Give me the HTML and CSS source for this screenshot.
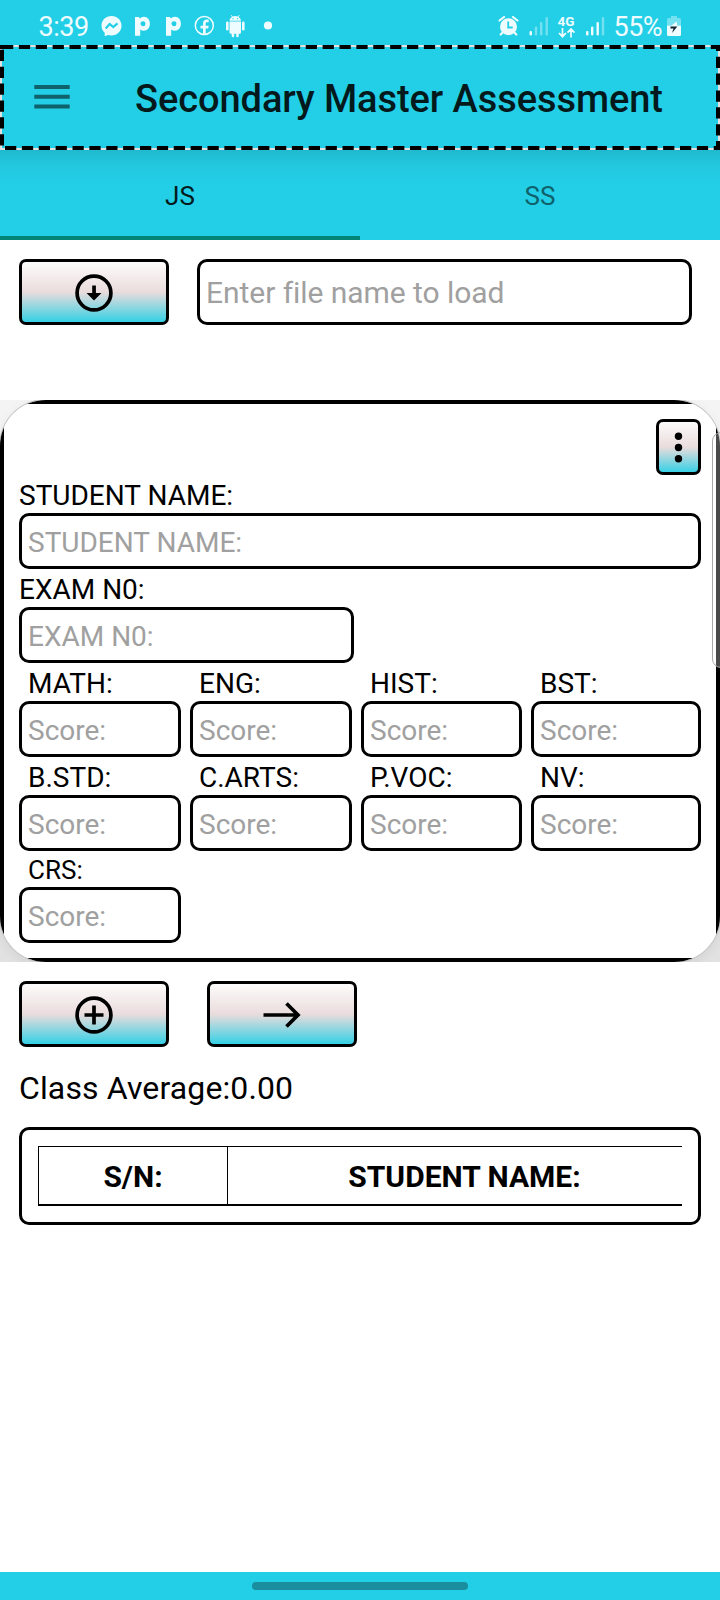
FILE: index.html
```html
<!DOCTYPE html>
<html lang="en">
<head>
<meta charset="utf-8">
<title>Secondary Master Assessment</title>
<link rel="stylesheet" href="styles.css">
</head>
<body>
<div class="screen">
  <div class="status">
    <span class="clock">3:39</span>
    <svg class="status-left" width="174" height="24" viewBox="0 0 174 24" fill="#eefcff">
      <path d="M10.500 1C4.600 1 .5 5.300.5 10.700c0 2.900 1.200 5.300 3.200 7v3.500l3.300-1.300c1.100.3 2.300.5 3.500.5 5.900 0 10-4.300 10-9.700S16.400 1 10.500 1z"/>
      <path d="M4.700 13.500l4-4.500 3.500 3 4.300-3.700" fill="none" stroke="#23cfe6" stroke-width="2.200"/>
      <g id="p-logo"><path fill-rule="evenodd" d="M34 2h3.800l1.200 1.500C40 2.500 41.300 1.800 42.900 1.800c3.700 0 6 3.100 6 6.900s-2.400 7-6.200 7c-1.300 0-2.500-.4-3.500-1.200v6.200H34zM42 6.200a2.500 2.500 0 1 0 .01 5A2.500 2.500 0 0 0 42 6.200z"/></g>
      <use href="#p-logo" x="31"/>
      <circle cx="103.300" cy="10.500" r="9" fill="none" stroke="#eefcff" stroke-width="1.500"/>
      <path d="M102 19.500v-6h-2.500v-2.800h2.500V8.500c0-2.800 1.500-4 4-4h1.700v2.700h-1.600c-1 0-1.400.4-1.400 1.400v2.100h3l-.5 2.800h-2.500v6z"/>
      <path d="M128.500 6.500h11.500v11a1.200 1.200 0 0 1-1.200 1.200h-1.100v2.300a1.200 1.200 0 0 1-2.500 0v-2.300h-2v2.300a1.200 1.200 0 0 1-2.500 0v-2.300h-1a1.200 1.200 0 0 1-1.200-1.200zM128.500 5.700c.2-1.700 1.100-3 2.500-3.800L129.800.3l.6-.4 1.200 1.600a7 7 0 0 1 5.300 0l1.200-1.600.6.4-1.200 1.600c1.400.8 2.300 2.100 2.500 3.800z"/>
      <rect x="125" y="6.500" width="2.600" height="9" rx="1.300"/><rect x="141" y="6.500" width="2.600" height="9" rx="1.300"/>
      <circle cx="132" cy="3.700" r=".6" fill="#23cfe6"/><circle cx="136.600" cy="3.700" r=".6" fill="#23cfe6"/>
      <circle cx="167" cy="10.500" r="4.100"/>
    </svg>
    <div class="status-right">
      <svg width="52" height="24" viewBox="0 0 52 24" fill="#eefcff">
        <circle cx="10.500" cy="11.700" r="8.500"/>
        <path d="M1.500 5.500L6 2M19.500 5.500L15 2M5 17l-2.300 2.500M16 17l2.300 2.500" stroke="#eefcff" stroke-width="2.200" stroke-linecap="round"/>
        <path d="M10.200 6.500v6h4.500" fill="none" stroke="#23cfe6" stroke-width="1.800"/>
        <rect x="31.500" y="16" width="2.500" height="4.500" rx="1"/>
        <g opacity=".4"><rect x="36.800" y="11.500" width="2.400" height="9" rx="1"/><rect x="42" y="7" width="2.400" height="13.500" rx="1"/><rect x="47.500" y="2" width="2.400" height="18.500" rx="1"/></g>
      </svg>
      <div class="network">
        <span>4G</span>
        <svg width="18" height="10" viewBox="0 0 18 10" fill="none" stroke="#eefcff" stroke-width="1.700"><path d="M4.500 0v8.500M1 5l3.500 3.700L8 5M13 9.500V1M9.500 4.700L13 1l3.500 3.700"/></svg>
      </div>
      <svg class="bars" width="20" height="24" viewBox="0 0 20 24" fill="#eefcff">
        <rect x="1" y="16" width="2.500" height="4.500" rx="1"/><rect x="6" y="11.500" width="2.400" height="9" rx="1"/><rect x="11.500" y="7" width="2.400" height="13.500" rx="1"/><rect opacity=".4" x="16.800" y="2" width="2.400" height="18.500" rx="1"/>
      </svg>
      <span class="percent">55%</span>
      <svg class="battery" width="14" height="24" viewBox="0 0 14 24">
        <path d="M4 1h6v2h2.500q1.500 0 1.500 1.500V10.500H0V4.500Q0 3 1.500 3H4z" fill="#eefcff" opacity=".4"/>
        <path d="M0 10.500h14v9q0 1.500-1.500 1.500h-11Q0 21 0 19.500z" fill="#eefcff"/>
        <path d="M9.500 6.500L3.500 11.500h7z" fill="#eefcff"/><path d="M3.500 11.500h6.800L5 18l1.500-4.500H3.500z" fill="#123"/>
      </svg>
    </div>
  </div>

  <header class="toolbar">
    <svg class="menu" width="36" height="24" viewBox="0 0 36 24"><path d="M.3 2h35.400M.3 11.800h35.400M.3 21.600h35.400" stroke="#0f616b" stroke-width="4"/></svg>
    <h1>Secondary Master Assessment</h1>
    <svg class="outline" width="720" height="105" fill="none">
      <rect x="1" y="1" width="718" height="103" stroke="#e2e2e2" stroke-width="2"/>
      <rect x="2" y="2" width="716" height="101" stroke="#000" stroke-width="4" stroke-dasharray="11.250 5.625"/>
      <path d="M0 2h8" stroke="#000" stroke-width="4"/>
    </svg>
  </header>
  <nav class="tabs"><span class="tab active">JS</span><span class="tab">SS</span></nav>

  <section class="load">
    <button class="btn wide"><svg width="40" height="40" viewBox="0 0 40 40"><circle cx="20" cy="20" r="16.900" fill="none" stroke="#000" stroke-width="3.700"/><path d="M18.200 12.500h3.700v7.500h5.600L20 27.500 12.500 20h5.700z"/></svg></button>
    <div class="field file">Enter file name to load</div>
  </section>

  <div class="card-wrap">
    <div class="card">
      <div class="card-body">
        <button class="btn more"><svg width="10" height="32" viewBox="0 0 10 32"><circle cx="4.500" cy="5.300" r="3.700"/><circle cx="4.500" cy="16.500" r="3.700"/><circle cx="4.500" cy="27.700" r="3.700"/></svg></button>
        <div class="label">STUDENT NAME:</div>
        <div class="field">STUDENT NAME:</div>
        <div class="label">EXAM N0:</div>
        <div class="field exam">EXAM N0:</div>
        <div class="scores">
          <div><div class="label">MATH:</div><div class="field">Score:</div></div>
          <div><div class="label">ENG:</div><div class="field">Score:</div></div>
          <div><div class="label">HIST:</div><div class="field">Score:</div></div>
          <div><div class="label">BST:</div><div class="field">Score:</div></div>
          <div><div class="label">B.STD:</div><div class="field">Score:</div></div>
          <div><div class="label">C.ARTS:</div><div class="field">Score:</div></div>
          <div><div class="label">P.VOC:</div><div class="field">Score:</div></div>
          <div><div class="label">NV:</div><div class="field">Score:</div></div>
          <div><div class="label small">CRS:</div><div class="field">Score:</div></div>
        </div>
      </div>
    </div>
    <div class="scrollbar"></div>
  </div>

  <section class="actions">
    <button class="btn wide"><svg width="40" height="40" viewBox="0 0 40 40" fill="none" stroke="#000" stroke-width="3.700"><circle cx="20" cy="20" r="16.900"/><path d="M10.500 20h19M20 10.500v19"/></svg></button>
    <button class="btn wide"><svg width="40" height="40" viewBox="0 0 40 40" fill="none" stroke="#000" stroke-width="3.700"><path d="M1.500 20h35M24.500 8.500L36 20 24.500 31.500"/></svg></button>
  </section>
  <p class="average">Class Average:0.00</p>
  <div class="results">
    <div class="row"><div class="sn">S/N:</div><div class="name">STUDENT NAME:</div></div>
  </div>
  <footer class="gesture"><div class="pill"></div></footer>
</div>
</body>
</html>
```
FILE: styles.css
```css
* { box-sizing: border-box; }
body { margin: 0; font-family: Roboto, sans-serif; color: #000; background: #fff; }
svg { display: block; flex: none; }
.screen { width: 720px; height: 1600px; display: flex; flex-direction: column; overflow: hidden; }
.status { height: 45px; flex: none; background: #23cfe6; display: flex; padding: 15px 39.500px 0 38.500px; color: #eefcff; font-size: 27px; line-height: 24px; }
.clock { width: 62.500px; letter-spacing: -0.500px; }
.status-right { margin-left: auto; display: flex; }
.network { width: 18px; margin: 0 9px 0 8px; font-size: 13.500px; font-weight: 700; line-height: 13px; }
.bars { margin-right: 9px; }
.percent { width: 50px; letter-spacing: -0.500px; margin-right: 3px; }
.toolbar { position: relative; height: 105px; flex: none; background: #23cfe6; display: flex; align-items: center; padding-left: 34px; }
.menu { margin-top: -2px; }
.toolbar h1 { margin: 2px 0 0 65px; font-size: 38px; font-weight: 500; line-height: 44px; letter-spacing: -0.070px; color: #03191c; white-space: nowrap; }
.outline { position: absolute; left: 0; top: 0; }
.tabs { height: 90px; flex: none; display: flex; background: linear-gradient(#20b9cf, #22c7dd 14px, #23cfe6 34px); }
.tab { flex: 1; text-align: center; font-size: 26px; line-height: 92px; color: #0f616b; }
.active { color: #03191c; border-bottom: 4px solid #008577; }
.load { display: flex; gap: 28px; padding: 19px 19px 0; height: 160px; flex: none; }
.btn { margin: 0; padding: 0; display: flex; align-items: center; justify-content: center; border: 3px solid #000; border-radius: 7px; background: linear-gradient(#fff, #eadcdc 50%, #23cfe6) border-box; }
.wide { width: 150px; height: 66px; padding-top: 1px; }
.field { height: 56px; border: 3px solid #000; border-radius: 10px; padding: 1px 0 0 6px; font-size: 28px; line-height: 52px; color: #a0a0a0; white-space: nowrap; }
.file { width: 495px; height: 66px; font-size: 30px; line-height: 60px; letter-spacing: -0.050px; }
.card-wrap { position: relative; height: 562px; flex: none; overflow: hidden; background: linear-gradient(#f4f4f4 50%, #e2e2e2 50%); }
.card { height: 562px; border-radius: 46px; overflow: hidden; box-shadow: 0 0 0 1px #c4c4c4, 0 4px 14px rgba(0, 0, 0, .07); }
.card-body { height: 562px; border: 4px solid #000; background: #fff; padding: 15px; }
.more { width: 45px; height: 56px; margin-left: auto; }
.label { height: 38px; font-size: 28px; line-height: 41px; white-space: nowrap; }
.exam { width: 335px; }
.scores { display: grid; grid-template-columns: 162px 162px 161px 170px; column-gap: 9px; }
.scores .label { padding-left: 9px; }
.scores .small { height: 36px; font-size: 26px; line-height: 38px; }
.scrollbar { position: absolute; left: 712px; top: 32px; width: 18px; height: 236px; border: 1px solid #aaa; border-radius: 9px; background: rgba(255, 255, 255, .29); }
.actions { display: flex; gap: 38px; padding: 19px 19px 0; }
.average { margin: 22px 0 0 19px; height: 58px; font-size: 32px; line-height: 38px; letter-spacing: 0.120px; }
.results { margin: 0 19px; height: 98px; flex: none; border: 3px solid #000; border-radius: 10px; padding: 16px; }
.row { height: 60px; display: flex; border-top: 1px solid #000; border-bottom: 2px solid #000; font-size: 30px; font-weight: 700; line-height: 60px; text-align: center; }
.sn { width: 189px; border-left: 1px solid #000; }
.name { flex: 1; border-left: 1px solid #000; padding-left: 19px; }
.gesture { margin-top: auto; height: 28px; background: #23cfe6; padding: 10px 252px 0; }
.pill { height: 8px; border-radius: 4px; background: #1a8e9e; }
```
